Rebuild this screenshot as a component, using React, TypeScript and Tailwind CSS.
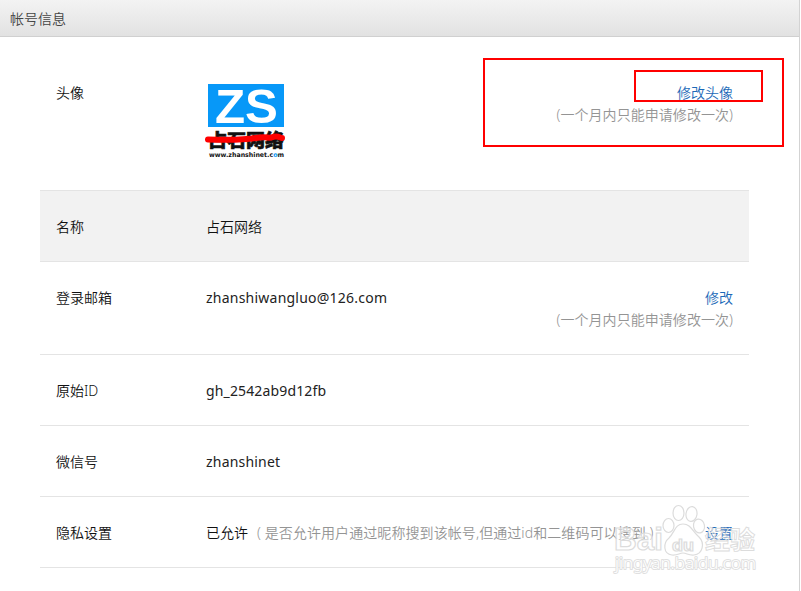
import * as React from 'react';
import { clsx } from 'clsx';

interface SettingRowProps {
  label: string;
  action?: string;
  hint?: string;
  highlighted?: boolean;
  children: React.ReactNode;
}

function SettingRow({ label, action, hint, highlighted, children }: SettingRowProps) {
  return (
    <li
      className={clsx(
        'flex border-b border-[#e4e4e4] px-4 pt-[25px] pb-[23px]',
        highlighted && 'bg-[#f2f2f2]'
      )}
    >
      <h4 className="w-[150px] shrink-0">{label}</h4>
      <div className="min-w-0 flex-1 whitespace-nowrap">{children}</div>
      {action && (
        <div className="shrink-0 text-right">
          <a className="text-[#1c69b8]">{action}</a>
          {hint && <p className="tracking-[0.05px] text-[#949494]">{hint}</p>}
        </div>
      )}
    </li>
  );
}

function Avatar() {
  return (
    <svg width="84" height="85" viewBox="0 1 84 85" className="-ml-1" aria-label="占石网络">
      <rect x="6" y="3" width="76" height="43" fill="#0798f8" />
      <text
        x="13"
        y="41.5"
        textLength="63"
        lengthAdjust="spacingAndGlyphs"
        className="font-['Liberation_Sans'] text-[49px] font-bold"
        fill="#fff"
      >
        ZS
      </text>
      <text
        x="6"
        y="66"
        textLength="76"
        lengthAdjust="spacingAndGlyphs"
        className="font-['Noto_Sans_CJK_SC'] text-[18px] font-black"
        fill="#111"
        stroke="#111"
        strokeWidth="0.6"
      >
        占石网络
      </text>
      <text
        x="7"
        y="75.5"
        textLength="75"
        lengthAdjust="spacingAndGlyphs"
        className="font-['DejaVu_Sans'] text-[6.5px] font-bold"
        fill="#111"
      >
        www.zhanshinet.c<tspan fill="#0798f8">o</tspan>m
      </text>
      <path
        d="M6 58.5 C22 59 42 59 54 57 S66 58 71 56 S78 57 80 57"
        fill="none"
        stroke="#f00"
        strokeWidth="6"
        strokeLinecap="round"
      />
    </svg>
  );
}

function Watermark() {
  return (
    <svg
      width="150"
      height="76"
      viewBox="0 0 150 76"
      className="pointer-events-none absolute top-[500px] left-[610px]"
      fill="#fff"
      fillOpacity="0.5"
      stroke="#dcdcdc"
      strokeWidth="1.2"
    >
      <text x="4" y="50" textLength="49" lengthAdjust="spacingAndGlyphs" className="font-['Liberation_Sans'] text-[32px] font-bold">
        Bai
      </text>
      <ellipse cx="58.5" cy="25.5" rx="5.5" ry="7" />
      <ellipse cx="68.5" cy="13" rx="5.5" ry="7.5" />
      <ellipse cx="81.5" cy="14" rx="5.5" ry="7.5" transform="rotate(8 81.5 14)" />
      <ellipse cx="89" cy="26" rx="5.5" ry="7" transform="rotate(-10 89 26)" />
      <path d="M73 24 C81 24 82 31 89 37 C95 43 93 54 84 55 C78 55.5 77 53 73 53 C69 53 68 55.5 62 55 C53 54 53 43 59 38 C65 32 65 24 73 24 Z" />
      <text x="62" y="51" textLength="22" lengthAdjust="spacingAndGlyphs" className="font-['Liberation_Sans'] text-[17px] font-bold">
        du
      </text>
      <text
        x="95"
        y="49"
        textLength="50"
        lengthAdjust="spacingAndGlyphs"
        className="font-['Noto_Sans_CJK_SC'] text-[25px] font-bold"
        fillOpacity="0.2"
        strokeWidth="0.9"
      >
        经验
      </text>
      <text
        x="5"
        y="69"
        textLength="141"
        lengthAdjust="spacingAndGlyphs"
        className="font-['Noto_Sans'] text-[17px]"
        fillOpacity="1"
        stroke="#e0e0e0"
        strokeWidth="2"
        strokeLinejoin="round"
        paintOrder="stroke"
      >
        jingyan.baidu.com
      </text>
    </svg>
  );
}

export default function App() {
  return (
    <div className="relative h-[591px] w-[801px] overflow-hidden bg-white font-['Noto_Sans','Noto_Sans_CJK_SC',sans-serif] text-sm leading-[22px] font-[350] text-[#111]">
      <div className="flex h-full w-[800px] flex-col border-r border-[#d3d3d3]">
        <header className="flex h-[37px] shrink-0 items-center border-b border-[#d0d0d0] bg-linear-to-b from-[#f3f3f3] to-[#e2e2e2] px-2.5 pt-0.5 text-[#444]">
          <h3>帐号信息</h3>
        </header>

        <ul className="mr-[50px] ml-10 pt-5">
          <SettingRow label="头像" action="修改头像" hint="(一个月内只能申请修改一次)">
            <Avatar />
          </SettingRow>
          <SettingRow label="名称" highlighted>
            占石网络
          </SettingRow>
          <SettingRow label="登录邮箱" action="修改" hint="(一个月内只能申请修改一次)">
            <span className="font-normal tracking-[0.23px] text-[#222]">zhanshiwangluo@126.com</span>
          </SettingRow>
          <SettingRow label="原始ID">
            <span className="font-normal tracking-[0.14px] text-[#222]">gh_2542ab9d12fb</span>
          </SettingRow>
          <SettingRow label="微信号">
            <span className="font-normal tracking-[0.2px] text-[#222]">zhanshinet</span>
          </SettingRow>
          <SettingRow label="隐私设置" action="设置">
            已允许
            <span className="ml-[9px] tracking-[0.08px] text-[#949494]">
              ( 是否允许用户通过昵称搜到该帐号,但通过id和二维码可以搜到 )
            </span>
          </SettingRow>
        </ul>
      </div>

      {/* red marker boxes */}
      <div className="absolute top-[58px] left-[483px] h-[89px] w-[301px] border-2 border-[#f00]" />
      <div className="absolute top-[70px] left-[634px] h-[32px] w-[129px] border-2 border-[#f00]" />
      <Watermark />
    </div>
  );
}
